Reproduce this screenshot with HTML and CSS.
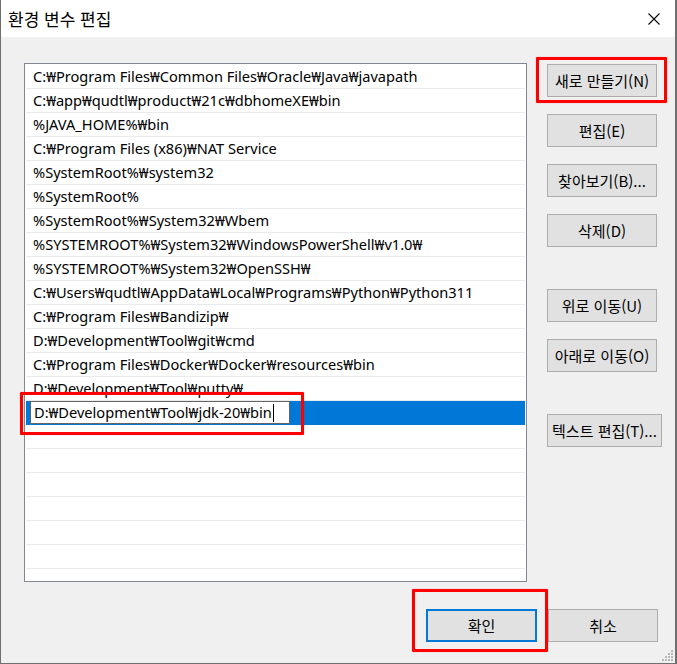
FILE: index.html
```html
<!DOCTYPE html>
<html lang="ko">
<head>
<meta charset="utf-8">
<title>환경 변수 편집</title>
<link rel="stylesheet" href="styles.css">
</head>
<body>
<div class="window">
  <div class="titlebar">
    <span class="title">환경 변수 편집</span>
    <span class="close">
      <svg width="12" height="12" viewBox="0 0 12 12"><path d="M0.5 0.5 L11.5 11.5 M11.5 0.5 L0.5 11.5" stroke="#000" stroke-width="1.1" fill="none"/></svg>
    </span>
  </div>
  <div class="body">
    <div class="main">
      <div class="list">
        <div class="row">C:₩Program Files₩Common Files₩Oracle₩Java₩javapath</div>
        <div class="row">C:₩app₩qudtl₩product₩21c₩dbhomeXE₩bin</div>
        <div class="row">%JAVA_HOME%₩bin</div>
        <div class="row">C:₩Program Files (x86)₩NAT Service</div>
        <div class="row">%SystemRoot%₩system32</div>
        <div class="row">%SystemRoot%</div>
        <div class="row">%SystemRoot%₩System32₩Wbem</div>
        <div class="row">%SYSTEMROOT%₩System32₩WindowsPowerShell₩v1.0₩</div>
        <div class="row">%SYSTEMROOT%₩System32₩OpenSSH₩</div>
        <div class="row">C:₩Users₩qudtl₩AppData₩Local₩Programs₩Python₩Python311</div>
        <div class="row">C:₩Program Files₩Bandizip₩</div>
        <div class="row">D:₩Development₩Tool₩git₩cmd</div>
        <div class="row">C:₩Program Files₩Docker₩Docker₩resources₩bin</div>
        <div class="row">D:₩Development₩Tool₩putty₩</div>
        <div class="row selected"><div class="editbox">D:₩Development₩Tool₩jdk-20₩bin<span class="caret"></span></div></div>
        <div class="row"></div>
        <div class="row"></div>
        <div class="row"></div>
        <div class="row"></div>
        <div class="row"></div>
        <div class="row"></div>
        <div class="row"></div>
        <div class="row"></div>
      </div>
      <div class="buttons">
        <div class="group">
          <button class="btn">새로 만들기(N)</button>
          <button class="btn">편집(E)</button>
          <button class="btn">찾아보기(B)...</button>
          <button class="btn">삭제(D)</button>
        </div>
        <div class="group">
          <button class="btn">위로 이동(U)</button>
          <button class="btn">아래로 이동(O)</button>
        </div>
        <div class="group">
          <button class="btn wide">텍스트 편집(T)...</button>
        </div>
      </div>
    </div>
    <div class="footer">
      <button class="btn default">확인</button>
      <button class="btn">취소</button>
    </div>
  </div>
  <div class="grip">
    <svg width="12" height="12" viewBox="0 0 12 12" fill="#b8b8b8">
      <rect x="9" y="0" width="2" height="2"/>
      <rect x="6" y="3" width="2" height="2"/><rect x="9" y="3" width="2" height="2"/>
      <rect x="3" y="6" width="2" height="2"/><rect x="6" y="6" width="2" height="2"/><rect x="9" y="6" width="2" height="2"/>
      <rect x="0" y="9" width="2" height="2"/><rect x="3" y="9" width="2" height="2"/><rect x="6" y="9" width="2" height="2"/><rect x="9" y="9" width="2" height="2"/>
    </svg>
  </div>
  <div class="mark mark-new"></div>
  <div class="mark mark-edit"></div>
  <div class="mark mark-ok"></div>
</div>
</body>
</html>
```
FILE: styles.css
```css
* { box-sizing: border-box; }
html, body { margin: 0; padding: 0; background: #ffffff; }
body {
  font-family: "Noto Sans", "Noto Sans CJK KR", sans-serif;
  font-size: 14.6px;
  color: #000;
}
.window {
  position: relative;
  width: 677px;
  height: 664px;
  border-left: 1px solid #6f6f6f;
  border-right: 2px solid #6f6f6f;
  border-bottom: 1px solid #6f6f6f;
  background: #f0f0f0;
  display: flex;
  flex-direction: column;
  overflow: hidden;
}
.titlebar {
  height: 37px;
  background: #ffffff;
  display: flex;
  align-items: center;
  justify-content: space-between;
  padding: 0 15px 0 7px;
  flex: none;
}
.title {
  font-family: "Noto Sans CJK KR", sans-serif;
  font-size: 17px;
  padding-bottom: 1px;
}
.close { display: flex; }
.body {
  flex: 1;
  display: flex;
  flex-direction: column;
  padding: 26px 17px 0 23px;
}
.main {
  display: flex;
  gap: 20px;
  height: 519px;
}
.list {
  width: 503px;
  height: 519px;
  background: #fff;
  border: 1px solid #828790;
  padding-top: 1px;
  overflow: hidden;
  flex: none;
}
.row {
  height: 24px;
  margin: 0 1px;
  border-bottom: 1px solid #e9ebed;
  padding-left: 7px;
  line-height: 23px;
  white-space: nowrap;
  overflow: hidden;
}
.row.selected {
  background: #0078d7;
  padding-left: 4px;
  border-bottom-color: #0078d7;
  overflow: visible;
}
.editbox {
  width: 260px;
  height: 23px;
  background: #fff;
  border: 1px solid #646464;
  padding-left: 3px;
  line-height: 21px;
}
.caret {
  display: inline-block;
  width: 1px;
  height: 18px;
  background: #000;
  vertical-align: -4px;
  margin-left: 1px;
}
.buttons {
  display: flex;
  flex-direction: column;
  gap: 42px;
  width: 110px;
  padding-top: 1px;
}
.group {
  display: flex;
  flex-direction: column;
  gap: 17px;
}
.btn {
  width: 110px;
  height: 33px;
  background: #e1e1e1;
  border: 1px solid #adadad;
  border-radius: 0;
  font-family: "Noto Sans CJK KR", sans-serif;
  font-size: 15px;
  color: #000;
  padding: 0;
  white-space: nowrap;
  display: flex;
  align-items: center;
  justify-content: center;
}
.btn.wide { width: 115px; }
.btn.default { border: 2px solid #0078d7; width: 111px; }
.footer {
  display: flex;
  justify-content: flex-end;
  gap: 11px;
  padding-top: 27px;
}
.grip {
  position: absolute;
  right: 1px;
  bottom: 1px;
  display: flex;
}
.mark {
  position: absolute;
  border: 3px solid #ff0000;
  border-radius: 1px;
  box-shadow: 0 0 1px rgba(255,0,0,0.6);
}
.mark-new { left: 535px; top: 57px; width: 131px; height: 46px; }
.mark-edit { left: 19px; top: 392px; width: 284px; height: 43px; }
.mark-ok { left: 411px; top: 589px; width: 136px; height: 63px; }
```
